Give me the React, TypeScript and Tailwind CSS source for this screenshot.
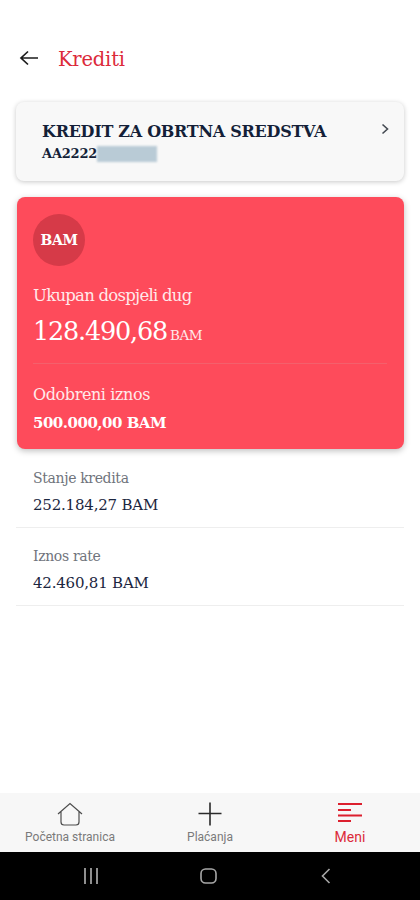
const slab = "font-['DejaVu_Serif',serif]";

function ListRow({ label, value }: { label: string; value: string }) {
  return (
    <div className="mx-4 h-[78px] border-b border-[#eeeeee] pl-[17px] pt-[18px]">
      <p className="text-[14px] leading-[20px] tracking-[-0.35px] text-[#70747c]">{label}</p>
      <p className="mt-[7px] text-[15px] leading-[20px] tracking-[-0.2px] text-[#1b2640]">{value}</p>
    </div>
  );
}

export default function App() {
  return (
    <div className={`flex h-[900px] w-[420px] flex-col overflow-hidden bg-white ${slab}`}>
      {/* Header */}
      <div className="flex h-[102px] items-start pl-[19px] pt-[47px]">
        <svg width="20" height="20" viewBox="0 0 20 20" fill="none" stroke="#1c1c1c" strokeWidth="1.7" className="mt-[1px]">
          <path d="M19 10H2M9 3.5L2 10l7 6.5" />
        </svg>
        <h1 className="ml-[19px] mt-px text-[19.5px] leading-[24px] tracking-[-0.2px] text-[#dc2a3a]">Krediti</h1>
      </div>

      {/* Account card */}
      <div className="mx-4 flex h-[79px] items-start justify-between rounded-lg bg-[#f8f8f8] pl-[26px] pr-[14px] pt-[19px] shadow-[0_1px_5px_rgba(0,0,0,0.22)]">
        <div>
          <p className="text-[16px] font-bold leading-[22px] tracking-[-0.27px] text-[#141f38]">KREDIT ZA OBRTNA SREDSTVA</p>
          <div className="mt-[3px] flex items-center">
            <span className="text-[13px] font-bold leading-[16px] tracking-[-0.2px] text-[#141f38]">AA2222</span>
            <span className="h-4 w-[60px] bg-[#b9cbd6] blur-[1px]" />
          </div>
        </div>
        <svg width="10" height="12" viewBox="0 0 10 12" fill="none" stroke="#444a52" strokeWidth="1.6" className="mt-[2px]">
          <path d="M2.5 1.5L7.5 6l-5 4.5" />
        </svg>
      </div>

      {/* Red summary card */}
      <div className="mx-4 mt-4 ml-[17px] h-[252px] rounded-lg bg-[#fe4b5b] pl-4 pr-[17px] pt-[17px] text-white shadow-[0_2px_6px_rgba(0,0,0,0.25)]">
        <div className="flex h-[52px] w-[52px] items-center justify-center rounded-full bg-[#d63a48] text-[14px] font-bold tracking-[-0.4px]">BAM</div>
        <p className="mt-[18px] text-[16.5px] leading-[24px] tracking-[-0.75px] text-[#ffe9ea]">Ukupan dospjeli dug</p>
        <div className="mt-[5px] flex items-baseline">
          <span className="text-[25.5px] leading-[36px] tracking-[-1.2px]">128.490,68</span>
          <span className="ml-[3px] text-[13.5px] tracking-[-0.5px] text-[#ffe9ea]">BAM</span>
        </div>
        <div className="mt-[14px] h-px bg-[#f4606c]" />
        <p className="mt-[19px] text-[16px] leading-[24px] tracking-[-0.4px] text-[#ffe9ea]">Odobreni iznos</p>
        <p className="mt-[4px] text-[15px] font-bold leading-[24px] tracking-[-0.5px]">500.000,00 BAM</p>
      </div>

      {/* Details */}
      <div className="mt-px">
        <ListRow label="Stanje kredita" value="252.184,27 BAM" />
        <ListRow label="Iznos rate" value="42.460,81 BAM" />
      </div>

      {/* Bottom nav */}
      <div className="mt-auto flex h-[59px] bg-[#f7f7f7] font-['Roboto',sans-serif]">
        <div className="flex w-[140px] flex-col items-center pt-[8px]">
          <svg width="28" height="26" viewBox="0 0 28 26" fill="none" stroke="#4d4d4d" strokeWidth="1.2">
            <path d="M2 13L14 2.500 26 13M5 10.500V21a3 3 0 0 0 3 3h12a3 3 0 0 0 3-3V10.500" />
          </svg>
          <span className="mt-[2px] text-[12px] leading-[16px] text-[#7a7a7a]">Početna stranica</span>
        </div>
        <div className="flex w-[140px] flex-col items-center pt-[8px]">
          <svg width="26" height="26" viewBox="0 0 26 26" fill="none" stroke="#2a2a2a" strokeWidth="1.6">
            <path d="M13 1.500v23M1.500 12.500h23" />
          </svg>
          <span className="mt-[2px] text-[12px] leading-[16px] text-[#7a7a7a]">Plaćanja</span>
        </div>
        <div className="flex w-[140px] flex-col items-center pt-[8px]">
          <svg width="26" height="26" viewBox="0 0 26 26" fill="none" stroke="#dc1f2e" strokeWidth="1.8">
            <path d="M1 3h24M1 9h13M1 14.500h24M1 20h13" />
          </svg>
          <span className="mt-[2px] text-[14px] leading-[16px] text-[#dc2a3a]">Meni</span>
        </div>
      </div>

      {/* Android system bar */}
      <div className="flex h-[48px] items-center bg-black">
        <div className="flex w-[182px] justify-center">
          <svg width="16" height="16" viewBox="0 0 16 16" stroke="#a8a8a8" strokeWidth="1.7" fill="none">
            <path d="M2 0v16M8 0v16M14 0v16" />
          </svg>
        </div>
        <div className="flex w-[52px] justify-center">
          <svg width="17" height="16" viewBox="0 0 17 16" stroke="#a8a8a8" strokeWidth="1.6" fill="none">
            <rect x="1" y="1" width="15" height="14" rx="4.500" />
          </svg>
        </div>
        <div className="flex w-[184px] justify-center">
          <svg width="10" height="16" viewBox="0 0 10 16" stroke="#a8a8a8" strokeWidth="1.6" fill="none">
            <path d="M8.500 1L1.500 8l7 7" />
          </svg>
        </div>
      </div>
    </div>
  );
}
